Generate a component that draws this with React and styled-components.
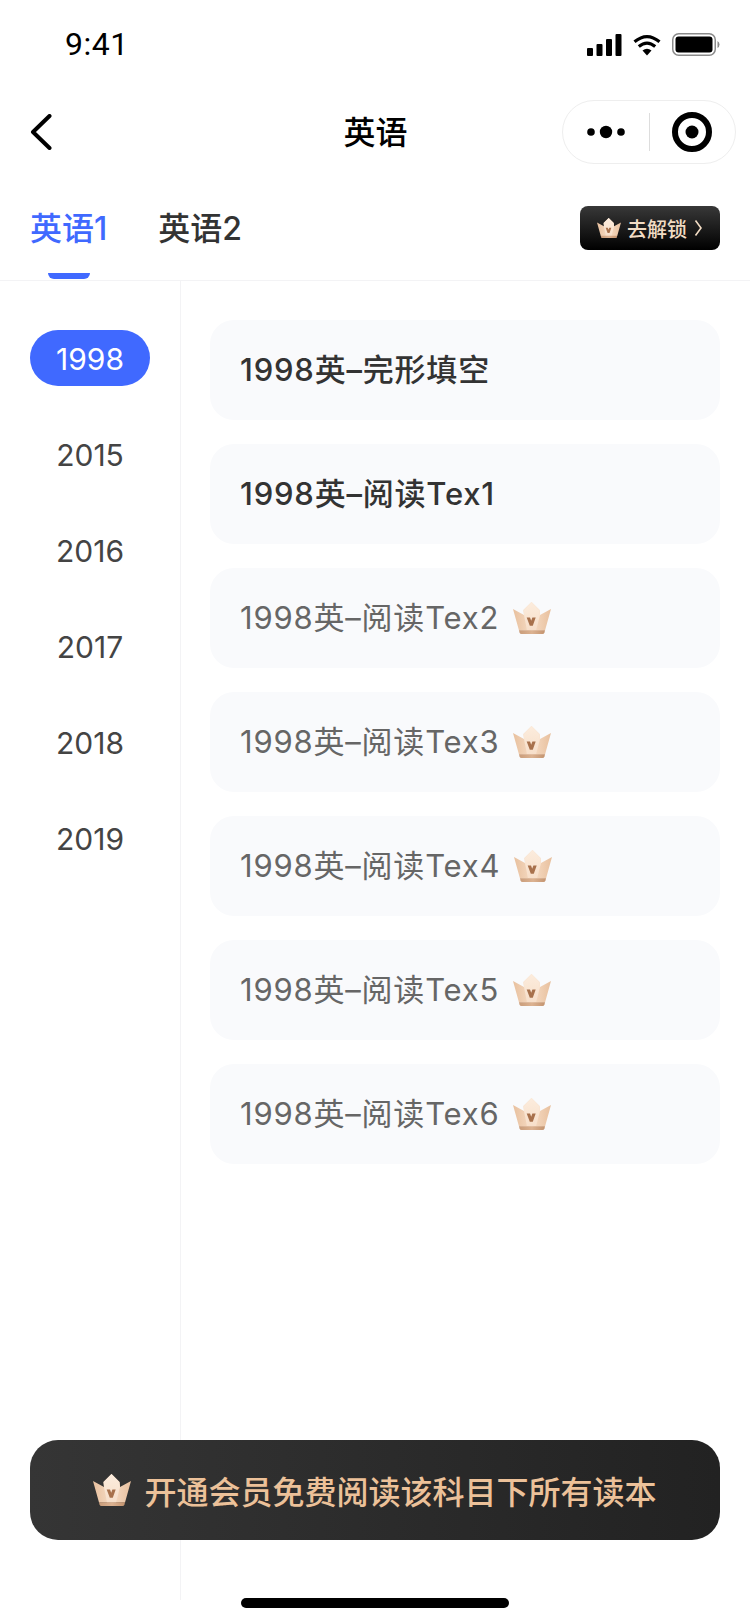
import React, { useId, useState } from 'react';
import styled, { createGlobalStyle } from 'styled-components';

const years = ['1998', '2015', '2016', '2017', '2018', '2019'];
const readers = [
  { name: '1998英–完形填空', free: true },
  { name: '1998英–阅读Tex1', free: true },
  { name: '1998英–阅读Tex2' },
  { name: '1998英–阅读Tex3' },
  { name: '1998英–阅读Tex4' },
  { name: '1998英–阅读Tex5' },
  { name: '1998英–阅读Tex6' },
];

const Crown = ({ size = 38 }) => {
  const id = useId();
  return (
    <svg width={size} height={(size * 32) / 38} viewBox="0 0 38 32">
      <defs>
        <linearGradient id={`${id}b`} x1="0" y1="0" x2="1" y2="0">
          <stop offset="0" stopColor="#e8c09e" />
          <stop offset="0.5" stopColor="#f6dcc5" />
          <stop offset="1" stopColor="#e8c09e" />
        </linearGradient>
        <linearGradient id={`${id}t`} x1="0" y1="0" x2="0" y2="1">
          <stop offset="0" stopColor="#fcecdd" />
          <stop offset="1" stopColor="#f7dfca" />
        </linearGradient>
        <linearGradient id={`${id}f`} x1="0" y1="0" x2="1" y2="0">
          <stop offset="0" stopColor="#c99c7a" />
          <stop offset="0.5" stopColor="#dcb291" />
          <stop offset="1" stopColor="#c3936f" />
        </linearGradient>
      </defs>
      <path d="M0 7 L11 13 L10.500 8 L18.500 0 L26.500 8 L27 13 L38 7 L32 28.500 H6 Z" fill={`url(#${id}b)`} />
      <path d="M18.500 0 L26.500 8 L27 13 L23 28.500 H14 L11 13 L10.500 8 Z" fill={`url(#${id}t)`} />
      <path d="M6 28.300 H32 L31.500 30.500 Q31 32 29.500 32 H8.500 Q7 32 6.500 30.500 Z" fill={`url(#${id}f)`} />
      <path d="M13.700 15.500 L17 15.500 L18.200 18.700 L19.400 15.500 L22.700 15.500 L19.800 23.700 H16.800 Z" fill="#a8714c" />
    </svg>
  );
};

const App = () => {
  const [tab, setTab] = useState(0);
  const [year, setYear] = useState('1998');

  return (
    <Page>
      <GlobalStyle />
      <StatusBar>
        <Time>9:41</Time>
        <StatusIcons>
          <svg width="35" height="22" viewBox="0 0 35 22">
            <rect x="0" y="14" width="6" height="8" rx="1" fill="#000" />
            <rect x="9.500" y="10" width="6" height="12" rx="1" fill="#000" />
            <rect x="19" y="5" width="6" height="17" rx="1" fill="#000" />
            <rect x="28.500" y="0" width="6" height="22" rx="1" fill="#000" />
          </svg>
          <svg width="30" height="22" viewBox="0 0 30 22">
            <path d="M15 21.500 L10.500 16.500 Q15 12.800 19.500 16.500 Z" fill="#000" />
            <path d="M6.800 12.500 Q15 5.600 23.200 12.500" fill="none" stroke="#000" strokeWidth="3.200" />
            <path d="M2.500 7.800 Q15 -2.600 27.500 7.800" fill="none" stroke="#000" strokeWidth="3.200" />
          </svg>
          <svg width="48" height="23" viewBox="0 0 48 23">
            <rect x="0.750" y="0.750" width="42.500" height="21.500" rx="6" fill="none" stroke="#8a8a8a" strokeWidth="1.500" />
            <rect x="3.500" y="3.500" width="37" height="16" rx="3" fill="#000" />
            <path d="M45.500 8 Q47.500 9 47.500 11.500 Q47.500 14 45.500 15 Z" fill="#8a8a8a" />
          </svg>
        </StatusIcons>
      </StatusBar>

      <NavBar>
        <BackButton aria-label="返回">
          <svg width="22" height="36" viewBox="0 0 22 36">
            <path d="M19.500 2 L3 18 L19.500 34" fill="none" stroke="#000" strokeWidth="4" strokeLinecap="round" strokeLinejoin="round" />
          </svg>
        </BackButton>
        <NavTitle>英语</NavTitle>
        <Capsule>
          <CapsuleSide>
            <svg width="38" height="14" viewBox="0 0 38 14">
              <circle cx="4" cy="7" r="3.800" fill="#000" />
              <circle cx="19" cy="7" r="6.200" fill="#000" />
              <circle cx="34" cy="7" r="3.800" fill="#000" />
            </svg>
          </CapsuleSide>
          <CapsuleDivider />
          <CapsuleSide>
            <svg width="40" height="40" viewBox="0 0 40 40">
              <circle cx="20" cy="20" r="17" fill="none" stroke="#000" strokeWidth="6" />
              <circle cx="20" cy="20" r="6.500" fill="#000" />
            </svg>
          </CapsuleSide>
        </Capsule>
      </NavBar>

      <TabBar>
        <Tabs>
          {['英语1', '英语2'].map((name, i) => (
            <Tab key={name} $active={tab === i} onClick={() => setTab(i)}>
              {name}
            </Tab>
          ))}
        </Tabs>
        <UnlockButton>
          <Crown size={24} />
          <span>去解锁</span>
          <svg width="10" height="20" viewBox="0 0 10 20">
            <path d="M2.500 2.500 L8 10 L2.500 17.500" fill="none" stroke="#f2dcc4" strokeWidth="1.600" />
          </svg>
        </UnlockButton>
      </TabBar>

      <Content>
        <Sidebar>
          {years.map((y) => (
            <YearItem key={y} $active={year === y} onClick={() => setYear(y)}>
              {y}
            </YearItem>
          ))}
        </Sidebar>
        <ReaderList>
          {readers.map((item) => (
            <ReaderCard key={item.name}>
              <ReaderName $free={item.free}>{item.name}</ReaderName>
              {!item.free && <Crown />}
            </ReaderCard>
          ))}
        </ReaderList>
      </Content>

      <MemberBar>
        <Crown />
        <MemberText>开通会员免费阅读该科目下所有读本</MemberText>
      </MemberBar>
      <HomeIndicator />
    </Page>
  );
};

const GlobalStyle = createGlobalStyle`
  html, body {
    margin: 0;
    padding: 0;
    background: #fff;
  }
  * {
    box-sizing: border-box;
  }
`;

const Page = styled.div`
  position: relative;
  width: 750px;
  height: 1624px;
  overflow: hidden;
  background: #fff;
  font-family: Inter, "Noto Sans CJK SC", sans-serif;
  color: #333;
`;

const StatusBar = styled.div`
  height: 88px;
  padding: 24px 30px 0 65px;
  display: flex;
  justify-content: space-between;
  align-items: flex-start;
`;

const Time = styled.div`
  font-family: Roboto, sans-serif;
  font-size: 32px;
  line-height: 40px;
  font-weight: 400;
  letter-spacing: 0.500px;
  color: #000;
`;

const StatusIcons = styled.div`
  display: flex;
  align-items: center;
  gap: 10px;
  padding-top: 9px;
`;

const NavBar = styled.div`
  height: 88px;
  padding: 12px 14px 0;
  display: grid;
  grid-template-columns: 1fr auto 1fr;
  align-items: start;
`;

const BackButton = styled.div`
  padding: 14px 0 0 16px;
  line-height: 0;
`;

const NavTitle = styled.div`
  padding: 1px 0 0 1px;
  font-size: 32px;
  line-height: 64px;
  font-weight: 500;
  color: #000;
`;

const Capsule = styled.div`
  justify-self: end;
  width: 174px;
  height: 64px;
  border: 1px solid #eee;
  border-radius: 32px;
  display: flex;
  align-items: center;
  background: #fff;
`;

const CapsuleSide = styled.div`
  flex: 1;
  display: flex;
  justify-content: center;
  align-items: center;
`;

const CapsuleDivider = styled.div`
  width: 1px;
  height: 38px;
  background: #ddd;
`;

const TabBar = styled.div`
  height: 105px;
  padding: 0 30px;
  display: flex;
  justify-content: space-between;
  align-items: flex-start;
  border-bottom: 1px solid #f3f3f5;
`;

const Tabs = styled.div`
  display: flex;
  gap: 51px;
`;

const Tab = styled.div`
  position: relative;
  height: 104px;
  padding-top: 30px;
  font-size: 32px;
  line-height: 46px;
  font-weight: 500;
  color: ${(p) => (p.$active ? '#4069ff' : '#333')};

  &::after {
    content: '';
    display: ${(p) => (p.$active ? 'block' : 'none')};
    position: absolute;
    left: 18px;
    bottom: 1px;
    width: 42px;
    height: 6px;
    background: #4069ff;
    border-radius: 0 0 6px 6px;
  }
`;

const UnlockButton = styled.div`
  margin-top: 30px;
  width: 140px;
  height: 44px;
  border-radius: 8px;
  background: linear-gradient(180deg, #383838, #000);
  display: flex;
  align-items: center;
  justify-content: center;
  gap: 6px;
  font-size: 20px;
  font-weight: 500;
  color: #f2dcc4;
`;

const Content = styled.div`
  display: flex;
  height: 1319px;
`;

const Sidebar = styled.div`
  width: 181px;
  flex: none;
  padding: 49px 30px 0;
  border-right: 1px solid #f3f3f5;
  display: flex;
  flex-direction: column;
  gap: 40px;
`;

const YearItem = styled.div`
  width: 120px;
  height: 56px;
  border-radius: 28px;
  font-size: 30px;
  line-height: 58px;
  text-align: center;
  color: ${(p) => (p.$active ? '#fff' : '#444')};
  background: ${(p) => (p.$active ? '#4069ff' : 'transparent')};
`;

const ReaderList = styled.div`
  flex: 1;
  padding: 39px 30px 0 29px;
  display: flex;
  flex-direction: column;
  gap: 24px;
`;

const ReaderCard = styled.div`
  height: 100px;
  padding: 0 30px;
  border-radius: 24px;
  background: #f9fafc;
  display: flex;
  align-items: center;
  gap: 14px;
`;

const ReaderName = styled.div`
  font-size: 31px;
  letter-spacing: 0.800px;
  line-height: 40px;
  font-weight: ${(p) => (p.$free ? 500 : 400)};
  color: ${(p) => (p.$free ? '#333' : '#666')};
`;

const MemberBar = styled.div`
  position: absolute;
  left: 30px;
  top: 1440px;
  width: 690px;
  height: 100px;
  border-radius: 28px;
  background: linear-gradient(90deg, #353535, #222);
  display: flex;
  align-items: center;
  justify-content: center;
  gap: 13px;
`;

const MemberText = styled.div`
  font-size: 32px;
  font-weight: 500;
  color: #ecc199;
`;

const HomeIndicator = styled.div`
  position: absolute;
  left: 241px;
  top: 1598px;
  width: 268px;
  height: 10px;
  border-radius: 5px;
  background: #000;
`;

export default App;
